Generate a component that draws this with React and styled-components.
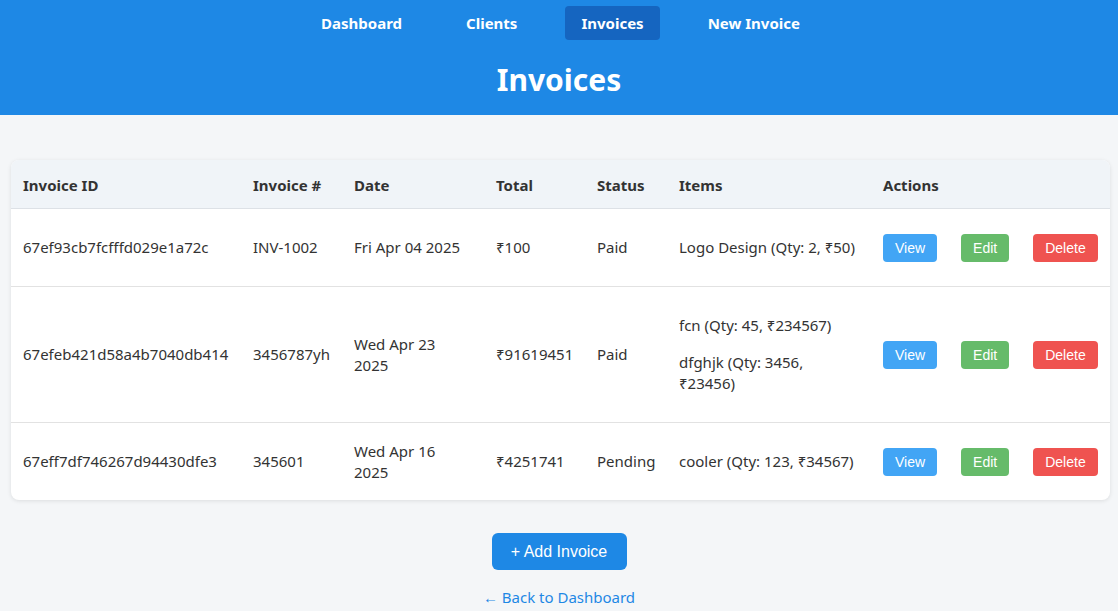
import React from 'react';
import styled, { createGlobalStyle } from 'styled-components';

const GlobalStyle = createGlobalStyle`
  body {
    margin: 0;
    background: #f4f6f8;
    font-family: "Noto Sans", "Open Sans", sans-serif;
    color: #333;
  }
`;

const Header = styled.header`
  background: #1e88e5;
  height: 115px;
  box-sizing: border-box;
  padding-top: 6px;
  display: flex;
  flex-direction: column;
  align-items: center;
`;

const Nav = styled.nav`
  display: flex;
  gap: 32px;
  justify-content: center;
  margin-left: 3px;
`;

const NavLink = styled.a`
  color: #fff;
  font-weight: 700;
  font-size: 15px;
  line-height: 34px;
  padding: 0 16px;
  border-radius: 4px;
  text-decoration: none;
  background: ${p => (p.$active ? '#1565c0' : 'transparent')};
`;

const Title = styled.h1`
  margin: 20px 0 0;
  color: #fff;
  font-size: 30px;
  line-height: 40px;
  font-weight: 700;
`;

const Card = styled.div`
  margin: 45px 8px 0 11px;
  background: #fff;
  border-radius: 8px;
  box-shadow: 0 1px 4px rgba(0, 0, 0, 0.1);
  overflow: hidden;
`;

const Table = styled.table`
  width: 100%;
  border-collapse: collapse;
  table-layout: fixed;
  font-size: 15px;
`;

const Col = styled.col`
  width: ${p => p.$w}px;
`;

const Th = styled.th`
  text-align: left;
  background: #f0f4f8;
  font-weight: 700;
  padding: 15px 12px 12px;
  line-height: 21px;
  border-bottom: 1px solid #dde1e6;
`;

const Tr = styled.tr`
  border-bottom: 1px solid #e2e2e2;
  &:last-child {
    border-bottom: none;
  }
`;

const Td = styled.td`
  padding: 12px;
  line-height: 21px;
  vertical-align: middle;
`;

const Item = styled.p`
  margin: 16px 0;
`;

const Actions = styled.div`
  display: flex;
  gap: 24px;
`;

const ActionButton = styled.button`
  font-family: "Liberation Sans", Arial, sans-serif;
  font-size: 14px;
  color: #fff;
  border: none;
  border-radius: 4px;
  height: 28px;
  padding: 0 12px;
  background: ${p => p.$bg};
`;

const Footer = styled.div`
  display: flex;
  flex-direction: column;
  align-items: center;
  margin-top: 33px;
`;

const AddButton = styled.button`
  font-family: "Liberation Sans", Arial, sans-serif;
  font-size: 16px;
  color: #fff;
  background: #1e88e5;
  border: none;
  border-radius: 6px;
  width: 135px;
  height: 37px;
`;

const BackLink = styled.a`
  margin-top: 17px;
  color: #1e88e5;
  font-size: 15px;
  text-decoration: none;
`;

const invoices = [
  {
    id: '67ef93cb7fcfffd029e1a72c',
    num: 'INV-1002',
    date: 'Fri Apr 04 2025',
    total: '₹100',
    status: 'Paid',
    items: ['Logo Design (Qty: 2, ₹50)'],
  },
  {
    id: '67efeb421d58a4b7040db414',
    num: '3456787yh',
    date: 'Wed Apr 23 2025',
    total: '₹91619451',
    status: 'Paid',
    items: ['fcn (Qty: 45, ₹234567)', 'dfghjk (Qty: 3456, ₹23456)'],
  },
  {
    id: '67eff7df746267d94430dfe3',
    num: '345601',
    date: 'Wed Apr 16 2025',
    total: '₹4251741',
    status: 'Pending',
    items: ['cooler (Qty: 123, ₹34567)'],
  },
];

const widths = [230, 101, 142, 101, 82, 204, 239];

export default function App() {
  return (
    <>
      <GlobalStyle />
      <Header>
        <Nav>
          <NavLink>Dashboard</NavLink>
          <NavLink>Clients</NavLink>
          <NavLink $active>Invoices</NavLink>
          <NavLink>New Invoice</NavLink>
        </Nav>
        <Title>Invoices</Title>
      </Header>
      <Card>
        <Table>
          <colgroup>
            {widths.map((w, i) => (
              <Col key={i} $w={w} />
            ))}
          </colgroup>
          <thead>
            <tr>
              <Th>Invoice ID</Th>
              <Th>Invoice #</Th>
              <Th>Date</Th>
              <Th>Total</Th>
              <Th>Status</Th>
              <Th>Items</Th>
              <Th>Actions</Th>
            </tr>
          </thead>
          <tbody>
            {invoices.map(inv => (
              <Tr key={inv.id}>
                <Td>{inv.id}</Td>
                <Td>{inv.num}</Td>
                <Td>{inv.date}</Td>
                <Td>{inv.total}</Td>
                <Td>{inv.status}</Td>
                <Td>
                  {inv.items.map(it => (
                    <Item key={it}>{it}</Item>
                  ))}
                </Td>
                <Td>
                  <Actions>
                    <ActionButton $bg="#42a5f5">View</ActionButton>
                    <ActionButton $bg="#66bb6a">Edit</ActionButton>
                    <ActionButton $bg="#ef5350">Delete</ActionButton>
                  </Actions>
                </Td>
              </Tr>
            ))}
          </tbody>
        </Table>
      </Card>
      <Footer>
        <AddButton>+ Add Invoice</AddButton>
        <BackLink>← Back to Dashboard</BackLink>
      </Footer>
    </>
  );
}
